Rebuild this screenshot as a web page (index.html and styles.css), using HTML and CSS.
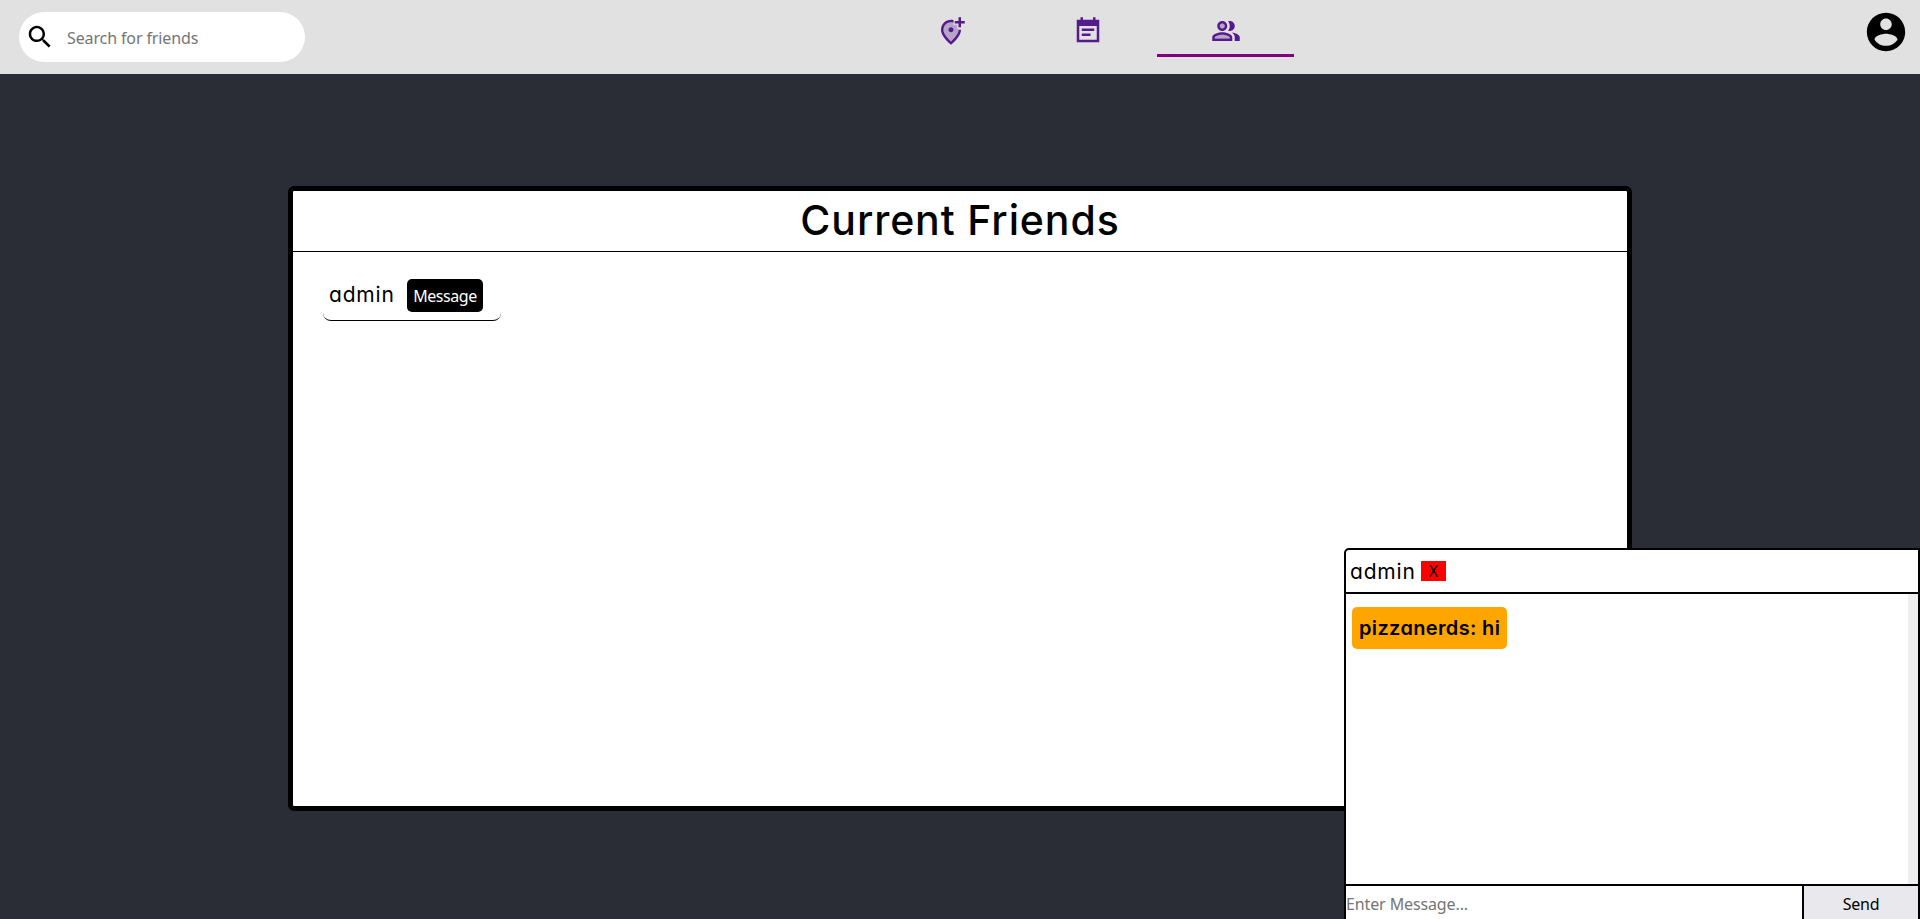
FILE: index.html
```html
<!DOCTYPE html>
<html lang="en">
<head>
<meta charset="utf-8">
<title>Friends</title>
<link rel="stylesheet" href="styles.css">
</head>
<body>
<header class="navbar">
  <label class="search">
    <svg class="search-icon" viewBox="0 0 24 24"><path d="M15.5 14h-.79l-.28-.27C15.41 12.59 16 11.11 16 9.5 16 5.91 13.09 3 9.5 3S3 5.91 3 9.5 5.91 16 9.5 16c1.61 0 3.09-.59 4.23-1.57l.27.28v.79l5 4.99L20.49 19l-4.99-5zm-6 0C7.01 14 5 11.99 5 9.5S7.01 5 9.5 5 14 7.01 14 9.5 11.99 14 9.5 14z"/></svg>
    <input class="search-input" type="text" placeholder="Search for friends">
  </label>
  <nav class="tabs">
    <a class="tab">
      <svg class="tab-icon" viewBox="0 0 24 24"><path opacity=".3" d="M18 11v.2c0 2.35-1.95 5.44-6 9.14-4.05-3.7-6-6.8-6-9.14C6 7.57 8.65 5 12 5c.7 0 1.37.12 2 .33V7h3v3h1z"/><path d="M20 1v3h3v2h-3v3h-2V6h-3V4h3V1zM12 13c1.1 0 2-.9 2-2s-.9-2-2-2-2 .9-2 2 .9 2 2 2zM14 3.25v2.08C13.37 5.12 12.7 5 12 5c-3.35 0-6 2.57-6 6.2 0 2.34 1.95 5.44 6 9.14 4.05-3.7 6-6.79 6-9.14V11h2v.2c0 3.32-2.67 7.25-8 11.8-5.33-4.55-8-8.48-8-11.8C4 6.22 7.8 3 12 3c.68 0 1.35.08 2 .25z"/></svg>
    </a>
    <a class="tab">
      <svg class="tab-icon" viewBox="0 0 24 24"><path d="M17 10H7v2h10v-2zM21 3h-3V1h-2v2H8V1H6v2H3v18h18V3zm-2 16H5V8h14v11zm-5-5H7v2h7v-2z"/></svg>
    </a>
    <a class="tab tab-active">
      <svg class="tab-icon" viewBox="0 0 24 24"><path opacity=".3" d="M9 15c-2.7 0-5.8 1.29-6 2.01V18h12v-1c-.2-.71-3.3-2-6-2zM11 8a2 2 0 1 1-4 0 2 2 0 0 1 4 0z"/><path d="M16.67 13.13C18.04 14.06 19 15.32 19 17v3h4v-3c0-2.18-3.57-3.47-6.33-3.87zM15 12c2.21 0 4-1.79 4-4s-1.79-4-4-4c-.47 0-.91.1-1.33.24C14.5 5.27 15 6.58 15 8s-.5 2.73-1.33 3.76c.42.14.86.24 1.33.24zM9 12c2.21 0 4-1.79 4-4s-1.79-4-4-4-4 1.79-4 4 1.79 4 4 4zm0-6c1.1 0 2 .9 2 2s-.9 2-2 2-2-.9-2-2 .9-2 2-2zM9 13c-2.67 0-8 1.34-8 4v3h16v-3c0-2.66-5.33-4-8-4zm6 5H3v-.99C3.2 16.29 6.3 15 9 15s5.8 1.29 6 2v1z"/></svg>
    </a>
  </nav>
  <svg class="account" viewBox="0 0 24 24"><path d="M12 2C6.48 2 2 6.48 2 12s4.48 10 10 10 10-4.48 10-10S17.52 2 12 2zm0 3c1.66 0 3 1.34 3 3s-1.34 3-3 3-3-1.34-3-3 1.34-3 3-3zm0 14.2c-2.5 0-4.71-1.28-6-3.22.03-1.99 4-3.08 6-3.08 1.99 0 5.97 1.09 6 3.08-1.29 1.94-3.5 3.22-6 3.22z"/></svg>
</header>
<main class="panel">
  <h1 class="panel-title"><span class="title-text">Current Friends</span></h1>
  <div class="friend">
    <span class="friend-name">admin</span>
    <button class="message-button">Message</button>
  </div>
</main>
<section class="chat">
  <div class="chat-header">
    <span class="chat-name">admin</span>
    <button class="chat-close">X</button>
  </div>
  <div class="chat-log">
    <div class="bubble">pizzanerds: hi</div>
  </div>
  <div class="chat-form">
    <input class="chat-input" type="text" placeholder="Enter Message...">
    <button class="send">Send</button>
  </div>
</section>
</body>
</html>
```

FILE: styles.css
```css
* { box-sizing: border-box; }
body {
  margin: 0;
  height: 919px;
  overflow: hidden;
  background: #2a2d35;
  color: #000;
  font-family: Inter, sans-serif;
  font-feature-settings: "cv11";
}
button, input {
  border: 0;
  margin: 0;
  padding: 0;
  outline: 0;
  font-family: "Noto Sans", sans-serif;
  font-size: 16px;
  color: #000;
}
input::placeholder { color: #757575; opacity: 1; }

.navbar {
  display: grid;
  grid-template-columns: 882px 412px 1fr;
  align-items: start;
  height: 74px;
  background: #e1e1e1;
}
.search {
  display: flex;
  align-items: center;
  width: 286px;
  height: 50px;
  margin: 12px 0 0 19px;
  padding-left: 6px;
  border-radius: 25px;
  background: #fff;
}
.search-icon { flex: none; width: 30px; height: 30px; margin-right: 12px; }
.search-input { width: 200px; padding-top: 2px; background: transparent; letter-spacing: -0.12px; }
.tabs { display: grid; grid-template-columns: 138px 137px 137px; height: 57px; }
.tab {
  display: flex;
  justify-content: center;
  padding-top: 16px;
  border-bottom: 3px solid transparent;
}
.tab-active { border-bottom-color: #800080; }
.tab-icon { width: 30px; height: 30px; fill: #551a8b; }
.tab:not(.tab-active) .tab-icon { margin-right: 1px; }
.account { justify-self: end; width: 46px; height: 46px; margin: 9px 11px 0 0; }

.panel {
  width: 1344px;
  height: 625px;
  margin: 112px auto 0;
  border: 5px solid #000;
  border-radius: 6px;
  background: #fff;
}
.panel-title {
  height: 61px;
  margin: 0;
  border-bottom: 1px solid #000;
  font-size: 41px;
  font-weight: 500;
  line-height: 59px;
  text-align: center;
}
.title-text { letter-spacing: 0.9px; }
.friend {
  display: flex;
  align-items: flex-start;
  width: 178px;
  height: 48px;
  margin: 21px 0 0 30px;
  padding: 6px 6px 0;
  border-bottom: 1px solid #000;
  border-radius: 8px;
}
.friend-name { width: 78px; font-size: 21px; line-height: 32px; letter-spacing: 0.8px; }
.message-button {
  width: 76px;
  height: 33px;
  border-radius: 5px;
  background: #000;
  color: #fff;
  letter-spacing: -0.45px;
}

.chat {
  position: absolute;
  top: 548px;
  right: 0;
  display: flex;
  flex-direction: column;
  width: 576px;
  height: 373px;
  border: 2px solid #000;
  border-radius: 5px 0 0 0;
  background: #fff;
}
.chat-header {
  display: flex;
  align-items: center;
  height: 44px;
  padding-left: 4px;
  border-bottom: 2px solid #000;
}
.chat-name { width: 71px; font-size: 21px; letter-spacing: 0.8px; }
.chat-close { width: 25px; height: 20px; background: #f00; line-height: 20px; }
.chat-log {
  height: 290px;
  padding: 13px 6px;
  border-right: 10px solid #efefef;
}
.bubble {
  width: 155px;
  height: 42px;
  padding-left: 7px;
  border-radius: 5px;
  background: #ffa500;
  font-size: 20px;
  font-weight: 600;
  letter-spacing: 0.35px;
  line-height: 42px;
  white-space: nowrap;
}
.chat-form { display: flex; height: 35px; border-top: 2px solid #000; }
.chat-input { width: 456px; height: 35px; letter-spacing: -0.12px; }
.send {
  flex: 1;
  height: 37px;
  padding-bottom: 2px;
  border-left: 2px solid #000;
  background: #e9e9ed;
  letter-spacing: -0.2px;
}
```
